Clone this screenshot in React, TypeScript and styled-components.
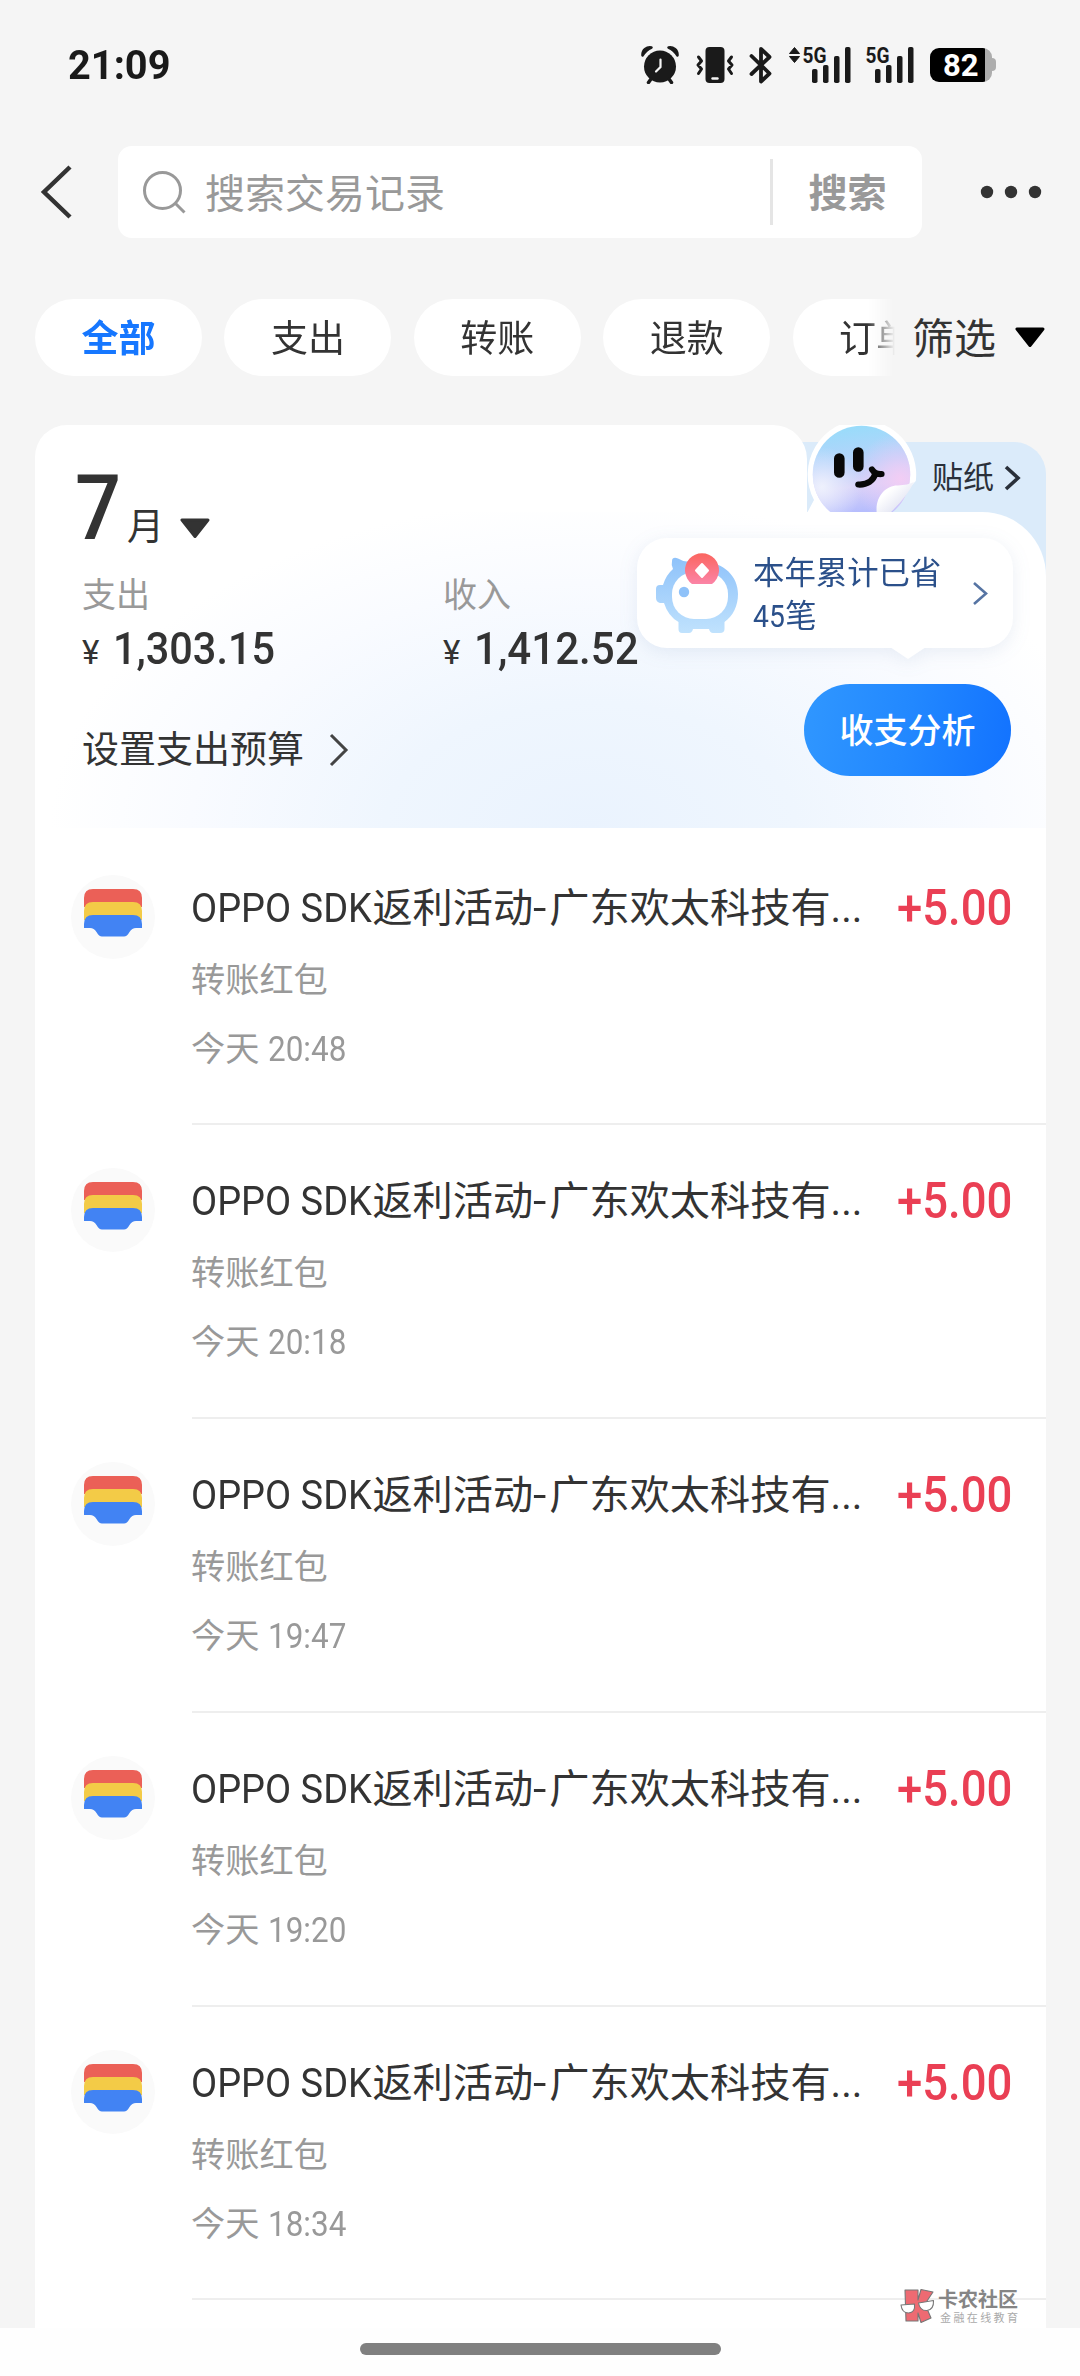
import React from "react";
import styled, { createGlobalStyle } from "styled-components";

const Global = createGlobalStyle`
  * { box-sizing: border-box; }
  body { margin: 0; background: #f5f5f5; }
`;

const Screen = styled.main`
  width: 1080px;
  height: 2376px;
  display: flex;
  flex-direction: column;
  overflow: hidden;
  background: #f5f5f5;
  color: #333;
  font-family: Roboto, "Noto Sans CJK SC", sans-serif;
`;

/* Narrow, DIN-like rendering for latin letters and digits. */
const Narrow = styled.span<{ $scale: number; $trim?: number }>`
  display: inline-block;
  white-space: pre;
  transform: scaleX(${(p) => p.$scale});
  transform-origin: 0 50%;
  margin-right: ${(p) => p.$trim ?? 0}px;
`;

const StatusBar = styled.header`
  height: 146px;
  display: flex;
  align-items: flex-start;
  justify-content: space-between;
  padding: 45px 84px 0 68px;
`;

const Clock = styled.div`
  font-size: 41px;
  font-weight: 700;
  line-height: 40px;
  color: #1a1a1a;
`;

const StatusIcons = styled.div`
  display: flex;
  align-items: center;
  height: 40px;
`;

const Gap = styled.span<{ $w: number }>`
  width: ${(p) => p.$w}px;
`;

const Signal = styled.svg`
  overflow: visible;
`;

const Battery = styled.div`
  position: relative;
  width: 62px;
  height: 34px;
  margin-right: 4px;
  border-radius: 9px;
  background: linear-gradient(90deg, #000 55px, #adadad 55px);
  color: #fff;
  font-size: 31px;
  font-weight: 700;
  line-height: 36px;
  padding-left: 13px;

  &::after {
    content: "";
    position: absolute;
    right: -4px;
    top: 10px;
    width: 4px;
    height: 13px;
    border-radius: 0 5px 5px 0;
    background: #adadad;
  }
`;

const SearchRow = styled.div`
  display: flex;
  align-items: center;
  height: 92px;
  padding: 0 38px 0 40px;
`;

const SearchBox = styled.div`
  display: flex;
  align-items: center;
  width: 804px;
  height: 92px;
  margin-left: 44px;
  margin-right: 58px;
  padding-left: 24px;
  border-radius: 14px;
  background: #fff;
  color: #999;
  font-size: 40px;
  line-height: 60px;
`;

const Placeholder = styled.span`
  flex: 1;
  margin-left: 19px;
  padding-top: 5px;
`;

const SearchAction = styled.button`
  width: 152px;
  height: 66px;
  padding: 4px 0 0;
  border: 0;
  border-left: 3px solid #e5e5e5;
  background: none;
  color: #999;
  font: 700 39px/60px Roboto, "Noto Sans CJK SC", sans-serif;
`;

const FilterRow = styled.nav`
  display: flex;
  align-items: center;
  height: 77px;
  margin-top: 61px;
  padding-left: 35px;
`;

const ChipScroller = styled.div`
  display: flex;
  gap: 22.4px;
  width: 860px;
  overflow: hidden;
  mask-image: linear-gradient(90deg, #000 832px, transparent 860px);
`;

const Chip = styled.button<{ $active?: boolean }>`
  flex: none;
  width: 167px;
  height: 77px;
  padding: 4px 0 0;
  border: 0;
  border-radius: 39px;
  background: #fff;
  color: ${(p) => (p.$active ? "#1677ff" : "#333")};
  font: ${(p) => (p.$active ? 700 : 400)} 37px/73px Roboto, "Noto Sans CJK SC", sans-serif;
`;

const FilterButton = styled.div`
  display: flex;
  align-items: center;
  gap: 19px;
  margin-left: 17px;
  font-size: 42px;
  line-height: 76px;
`;

const FilterLabel = styled.span`
  padding-top: 4px;
`;

const Card = styled.section`
  display: flex;
  flex-direction: column;
  position: relative;
  width: 1011px;
  height: 1903px;
  margin: 49px 0 0 35px;
  overflow: hidden;
`;

const StickerPanel = styled.div`
  position: absolute;
  top: 17px;
  right: 0;
  width: 280px;
  height: 150px;
  border-radius: 0 32px 0 0;
  background: #dbebfa;
`;

const StickerLink = styled.div`
  display: flex;
  align-items: center;
  gap: 10px;
  height: 70px;
  padding: 2px 0 0 166px;
  color: #2a303a;
  font-size: 31px;
  line-height: 40px;
`;

const StickerFace = styled.svg`
  position: absolute;
  left: 771px;
  top: 0;
`;

const Summary = styled.div`
  position: relative;
  height: 403px;
  flex: none;

  &::before {
    content: "";
    position: absolute;
    left: 0;
    top: 0;
    width: 772px;
    height: 89px;
    border-radius: 32px 34px 0 0;
    background: #fff;
  }
`;

const SummaryBase = styled.div`
  position: absolute;
  inset: 87px 0 0;
  border-top-right-radius: 64px;
  background: radial-gradient(ellipse 540px 330px at 555px 100%, #eaf3fe 0%, #eff6fe 38%, #f9fbff 74%, #fff 100%);
`;

const SummaryContent = styled.div`
  position: relative;
  display: flex;
  flex-direction: column;
  padding-left: 47px;
`;

const MonthPicker = styled.div`
  display: flex;
  align-items: baseline;
  height: 100px;
  margin-top: 31px;
  margin-left: -7px;
`;

const MonthNumber = styled.span`
  width: 50px;
  font-size: 90px;
  line-height: 106px;
  font-weight: 500;
`;

const MonthUnit = styled.span`
  width: 37px;
  margin-left: 2px;
  margin-right: 16px;
  font-size: 37px;
  line-height: 50px;
  transform: translateY(1px);
`;

const Totals = styled.div`
  display: flex;
  margin-top: 15px;
`;

const Total = styled.div`
  width: 361px;
`;

const TotalLabel = styled.div`
  color: #999;
  font-size: 34px;
  line-height: 48px;
`;

const TotalValue = styled.div`
  display: flex;
  align-items: baseline;
  height: 58px;
  font-size: 45px;
  line-height: 60px;
  font-weight: 500;
`;

const Currency = styled.span`
  width: 31px;
  font-size: 33px;
  font-weight: 400;
`;

const BudgetLink = styled.div`
  display: flex;
  align-items: center;
  gap: 25px;
  margin-top: 46px;
  font-size: 37px;
  line-height: 50px;
`;

const BudgetLabel = styled.span`
  padding-top: 3px;
`;

const SavingsBubble = styled.div`
  position: absolute;
  left: 602px;
  top: 113px;
  width: 376px;
  height: 110px;
  display: flex;
  align-items: center;
  padding-left: 18px;
  border-radius: 30px;
  background: #fff;
  color: #2b508a;
  font-size: 31.4px;
  line-height: 43px;
  filter: drop-shadow(0 4px 9px rgba(60, 100, 160, 0.1));

  &::after {
    content: "";
    position: absolute;
    left: 253px;
    top: 109px;
    border: 18px solid transparent;
    border-top: 12px solid #fff;
    border-bottom: 0;
  }
`;

const BubbleText = styled.div`
  width: 219px;
  margin-left: 14px;
  padding-top: 4px;
`;

const AnalysisButton = styled.button`
  position: absolute;
  left: 769px;
  top: 259px;
  width: 207px;
  height: 92px;
  padding: 3px 0 0;
  border: 0;
  border-radius: 46px;
  background: linear-gradient(100deg, #3097ff 0%, #2288ff 50%, #1272ff 100%);
  color: #fff;
  font: 500 34px/89px Roboto, "Noto Sans CJK SC", sans-serif;
`;

const RecordList = styled.ul`
  margin: 0;
  padding: 2.500px 0 0;
  list-style: none;
  height: 1500px;
  background: #fff;
`;

const Record = styled.li`
  display: flex;
  height: 293.75px;
`;

const RecordIcon = styled.div`
  width: 84px;
  height: 84px;
  margin: 44px 37px 0 36px;
  border-radius: 50%;
  background: #fafafa;
  display: flex;
  justify-content: center;
  padding-top: 14px;
`;

const RecordBody = styled.div`
  flex: 1;
  display: flex;
  justify-content: space-between;
  border-bottom: 2px solid #eee;
  padding: 48px 37px 0 0;
  margin-bottom: -1px;
`;

const RecordText = styled.div`
  width: 680px;
  margin-left: -1px;
  color: #999;
  font-size: 34.2px;
  white-space: nowrap;
`;

const RecordTitle = styled.div`
  color: #333;
  font-size: 40.2px;
  line-height: 60px;
`;

const Dash = styled.span`
  display: inline-block;
  margin: 0 4px 0 1px;
  transform: scaleX(1.2);
`;

const RecordKind = styled.div`
  margin-top: 17px;
  line-height: 48px;
`;

const RecordTime = styled.div`
  margin-top: 21px;
  line-height: 48px;
`;

const Amount = styled.div`
  width: 112px;
  height: 60px;
  color: #ea3f54;
  font-size: 50px;
  font-weight: 500;
  line-height: 58px;
`;

const Watermark = styled.div`
  position: absolute;
  left: 865px;
  top: 1863px;
  display: flex;
  gap: 3px;
  color: #858585;
`;

const WatermarkName = styled.div`
  padding-top: 1px;
  font-size: 20px;
  font-weight: 700;
  line-height: 23px;
`;

const WatermarkTagline = styled.div`
  padding-left: 2px;
  color: #aaa;
  font-size: 11px;
  line-height: 13px;
  letter-spacing: 2.4px;
`;

const HomeBar = styled.footer`
  display: flex;
  justify-content: center;
  height: 48px;
  padding-top: 15px;
  background: #fefefe;

  &::before {
    content: "";
    width: 361px;
    height: 12px;
    border-radius: 6px;
    background: #808080;
  }
`;

const AlarmIcon = () => (
  <svg width="38" height="38" viewBox="0 0 38 38" fill="none" stroke="#1a1a1a" strokeLinecap="round">
    <path d="M1.5 9.5C1 4 6 .5 10.500 1.500Q5 4 1.500 9.500ZM36.500 9.500C37 4 32 .5 27.500 1.500Q33 4 36.500 9.500Z" fill="#1a1a1a" strokeWidth="2.500" strokeLinejoin="round" />
    <circle cx="19" cy="20.500" r="16" fill="#1a1a1a" stroke="none" />
    <path d="M10 33l-2.500 3.500M28 33l2.500 3.500" strokeWidth="3.500" />
    <path d="M19.500 13.500v7.500l-4.500 4.500" stroke="#f5f5f5" strokeWidth="2.200" />
  </svg>
);

const VibrateIcon = () => (
  <svg width="38" height="38" viewBox="0 0 38 38" fill="none" stroke="#1a1a1a" strokeWidth="3" strokeLinecap="round" strokeLinejoin="round">
    <rect x="9.500" y="1" width="19" height="36" rx="4" fill="#1a1a1a" stroke="none" />
    <path d="M2.500 11l3 4-3.500 4 3.500 4-3 4.500M35.500 11l-3 4 3.500 4-3.500 4 3 4.500" />
    <path d="M16.500 32.500h5" stroke="#f5f5f5" strokeWidth="2.400" />
  </svg>
);

const BluetoothIcon = () => (
  <svg width="24" height="38" viewBox="0 0 24 38" fill="none" stroke="#1a1a1a" strokeWidth="3.800" strokeLinecap="round" strokeLinejoin="round">
    <path d="M2.500 10l18 17.500-8.500 8V3l8.500 8L2.500 28" />
  </svg>
);

const SignalIcon = ({ arrows }: { arrows?: boolean }) => (
  <Signal width="62" height="38" viewBox="0 0 62 38" fill="#1a1a1a">
    {arrows && <path d="M.5 7.500L5.500 1.500l5 6ZM.5 10.500h10l-5 6Z" stroke="#1a1a1a" strokeLinejoin="round" />}
    <text x="13.500" y="16.500" fontSize="22.500" fontWeight="700" fontFamily="Roboto, sans-serif" textLength="24" lengthAdjust="spacingAndGlyphs">5G</text>
    <rect x="23" y="23" width="5.500" height="14" rx="1.800" />
    <rect x="34" y="19" width="5.500" height="18" rx="1.800" />
    <rect x="45" y="10" width="5.500" height="27" rx="1.800" />
    <rect x="56" y="1" width="5.500" height="36" rx="1.800" />
  </Signal>
);

const Chevron = ({ w, h, color = "#333", stroke = 3 }: { w: number; h: number; color?: string; stroke?: number }) => (
  <svg width={w} height={h} viewBox={`0 0 ${w} ${h}`} fill="none" stroke={color} strokeWidth={stroke}>
    <path d={`M2 2L${w - 3} ${h / 2}L2 ${h - 2}`} />
  </svg>
);

const Triangle = ({ color }: { color: string }) => (
  <svg width="30" height="21" viewBox="0 0 30 21" fill={color} stroke={color} strokeWidth="3" strokeLinejoin="round">
    <path d="M2 2h26L15 18.500Z" />
  </svg>
);

const Sticker = () => (
  <StickerFace width="114" height="87" viewBox="0 0 114 87">
    <defs>
      <linearGradient id="face" x1="0.45" y1="0" x2="0.6" y2="1">
        <stop offset="0" stopColor="#98dcfa" />
        <stop offset="0.38" stopColor="#b8d2fb" />
        <stop offset="0.6" stopColor="#d9d2f8" />
        <stop offset="0.85" stopColor="#b6bdfd" />
      </linearGradient>
      <radialGradient id="pink">
        <stop offset="0" stopColor="#f2cdf4" />
        <stop offset="1" stopColor="#e8cdf8" stopOpacity="0" />
      </radialGradient>
      <radialGradient id="pale">
        <stop offset="0" stopColor="#eef1fd" />
        <stop offset="1" stopColor="#e6edfd" stopOpacity="0" />
      </radialGradient>
      <linearGradient id="fold" x1="0.3" y1="0.3" x2="0.8" y2="0.8">
        <stop offset="0" stopColor="#fff" />
        <stop offset="1" stopColor="#dcdff0" />
      </linearGradient>
      <clipPath id="round"><circle cx="55.500" cy="49.500" r="48.700" /></clipPath>
    </defs>
    <path d="M55.500-5A54.500 54.500 0 0 1 109.800 56L78 90H0L8 75A54.500 54.500 0 0 1 55.500-5Z" fill="#fff" />
    <g clipPath="url(#round)">
      <rect width="114" height="100" fill="url(#face)" />
      <circle cx="94" cy="54" r="46" fill="url(#pink)" />
      <circle cx="16" cy="62" r="40" fill="url(#pale)" />
    </g>
    <path d="M33.300 33.500v14M52.300 27.500v14" stroke="#080808" strokeWidth="10.600" strokeLinecap="round" />
    <path d="M52.300 59.500C61 60 67.500 56 69.500 48M66 44.500q3 5 9.500 4.500" fill="none" stroke="#080808" strokeWidth="6.200" strokeLinecap="round" />
    <path d="M71 90C68 72 80 60 92 60.500Q102 60 108 57Q101 72 82 90Z" fill="url(#fold)" />
  </StickerFace>
);

const PiggyIcon = () => (
  <svg width="84" height="82" viewBox="0 0 84 82">
    <defs>
      <linearGradient id="pig" x1="0" y1="0" x2="0" y2="1">
        <stop offset="0" stopColor="#8ec2fa" />
        <stop offset="1" stopColor="#c0e2fd" />
      </linearGradient>
      <linearGradient id="coin" x1="0" y1="0" x2="0" y2="1">
        <stop offset="0" stopColor="#fb655f" />
        <stop offset="1" stopColor="#fb84a6" />
      </linearGradient>
    </defs>
    <path d="M17 9C17 5.500 20 5 23 6.500Q28 9.500 32 9.500H46C70 10 83 25 83 42C83 54 78 64 69.500 70V77Q69.500 81 65 81H58Q55 81 54 77H38Q37 81 34 81H27Q23.500 81 23.500 77V70Q13 64 9 51H5Q1 50 1 46V37Q1 33 5 33H8Q11 23 18 17Q16 13 17 9Z" fill="url(#pig)" />
    <rect x="17" y="20" width="56" height="47" rx="22" fill="#fff" />
    <circle cx="29" cy="40" r="5.200" fill="#8fc2f9" />
    <path d="M37 32A17 17 0 1 1 57 32Z" fill="url(#coin)" />
    <path d="M47 12l6 6.500-6 6.500-6-6.500Z" fill="#fff" stroke="#fff" strokeWidth="2" strokeLinejoin="round" />
  </svg>
);

const PacketIcon = () => (
  <svg width="58" height="48" viewBox="0 0 58 48">
    <path d="M0 18V9Q0 0 9 0H49Q58 0 58 9V18Z" fill="#eb6057" />
    <path d="M0 31V22Q0 13 9 13H49Q58 13 58 22V31Z" fill="#f3cb47" />
    <path d="M0 39V35Q0 26 9 26H49Q58 26 58 35V39H52Q48 39 45.500 43Q43 47.500 40 47.500H18Q15 47.500 12.500 43Q10 39 6 39Z" fill="#4283f3" />
  </svg>
);

const WatermarkLogo = () => (
  <svg width="35" height="36" viewBox="0 0 35 36" stroke="#777" strokeWidth="1.100" strokeLinejoin="round">
    <path d="M5 2H18V12L21 1.500L33 4L25 16L31 30L21 34.500L18 25V33H6Z" fill="#ee6a72" />
    <path d="M1 17L14.500 16Q15.500 24.500 8.500 25Q2 25 1 17ZM18.500 15L33.500 12.500Q34 21.500 27 22.500Q20 23 18.500 15Z" fill="#fff" />
  </svg>
);

const chips = ["全部", "支出", "转账", "退款", "订单"];
const times = ["20:48", "20:18", "19:47", "19:20", "18:34"];

export default function App() {
  return (
    <Screen>
      <Global />
      <StatusBar>
        <Clock><Narrow $scale={0.97}>21:09</Narrow></Clock>
        <StatusIcons>
          <AlarmIcon />
          <Gap $w={17} />
          <VibrateIcon />
          <Gap $w={15} />
          <BluetoothIcon />
          <Gap $w={16} />
          <SignalIcon arrows />
          <Gap $w={1} />
          <SignalIcon />
          <Gap $w={16.5} />
          <Battery>82</Battery>
        </StatusIcons>
      </StatusBar>

      <SearchRow>
        <svg width="34" height="54" viewBox="0 0 34 54" fill="none" stroke="#333" strokeWidth="4.500">
          <path d="M30 2L4 27L30 52" />
        </svg>
        <SearchBox>
          <svg width="44" height="44" viewBox="0 0 44 44" fill="none" stroke="#999" strokeWidth="3">
            <circle cx="20.500" cy="20.500" r="18" />
            <path d="M33 33l9.500 9.500" />
          </svg>
          <Placeholder>搜索交易记录</Placeholder>
          <SearchAction>搜索</SearchAction>
        </SearchBox>
        <svg width="62" height="14" viewBox="0 0 62 14" fill="#333">
          <circle cx="7" cy="7" r="6.200" />
          <circle cx="31" cy="7" r="6.200" />
          <circle cx="55" cy="7" r="6.200" />
        </svg>
      </SearchRow>

      <FilterRow>
        <ChipScroller>
          {chips.map((c, i) => (
            <Chip key={c} $active={i === 0}>{c}</Chip>
          ))}
        </ChipScroller>
        <FilterButton>
          <FilterLabel>筛选</FilterLabel>
          <Triangle color="#000" />
        </FilterButton>
      </FilterRow>

      <Card>
        <StickerPanel>
          <StickerLink>
            贴纸
            <Chevron w={17} h={26} color="#2a303a" stroke={3.6} />
          </StickerLink>
        </StickerPanel>
        <Summary>
          <SummaryBase />
          <Sticker />
          <SummaryContent>
            <MonthPicker>
              <MonthNumber><Narrow $scale={0.9}>7</Narrow></MonthNumber>
              <MonthUnit>月</MonthUnit>
              <Triangle color="#333" />
            </MonthPicker>
            <Totals>
              <Total>
                <TotalLabel>支出</TotalLabel>
                <TotalValue><Currency>¥</Currency><Narrow $scale={0.92}>1,303.15</Narrow></TotalValue>
              </Total>
              <Total>
                <TotalLabel>收入</TotalLabel>
                <TotalValue><Currency>¥</Currency><Narrow $scale={0.935}>1,412.52</Narrow></TotalValue>
              </Total>
            </Totals>
            <BudgetLink>
              <BudgetLabel>设置支出预算</BudgetLabel>
              <Chevron w={20} h={34} color="#444" />
            </BudgetLink>
          </SummaryContent>
          <SavingsBubble>
            <PiggyIcon />
            <BubbleText>
              本年累计已省<br />
              <Narrow $scale={0.9} $trim={-3}>45</Narrow>笔
            </BubbleText>
            <Chevron w={17} h={25} color="#5674a3" stroke={2.6} />
          </SavingsBubble>
          <AnalysisButton>收支分析</AnalysisButton>
        </Summary>

        <RecordList>
          {times.map((t) => (
            <Record key={t}>
              <RecordIcon><PacketIcon /></RecordIcon>
              <RecordBody>
                <RecordText>
                  <RecordTitle>
                    <Narrow $scale={0.945} $trim={-10}>OPPO SDK</Narrow>返利活动<Dash>-</Dash>广东欢太科技有...
                  </RecordTitle>
                  <RecordKind>转账红包</RecordKind>
                  <RecordTime>今天 <Narrow $scale={0.92}>{t}</Narrow></RecordTime>
                </RecordText>
                <Amount><Narrow $scale={0.91}>+5.00</Narrow></Amount>
              </RecordBody>
            </Record>
          ))}
        </RecordList>

        <Watermark>
          <WatermarkLogo />
          <div>
            <WatermarkName>卡农社区</WatermarkName>
            <WatermarkTagline>金融在线教育</WatermarkTagline>
          </div>
        </Watermark>
      </Card>
      <HomeBar />
    </Screen>
  );
}
